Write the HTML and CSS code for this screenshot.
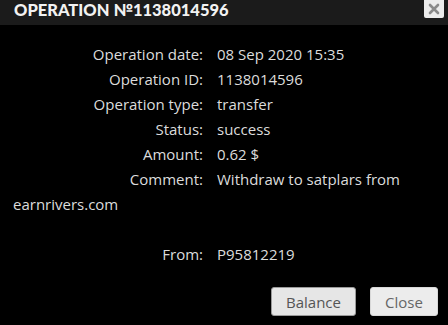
FILE: index.html
```html
<!DOCTYPE html>
<html>
<head>
<meta charset="utf-8">
<link rel="stylesheet" href="styles.css">
</head>
<body>
<div class="dialog">
  <div class="header">
    <div class="title">OPERATION №1138014596</div>
    <button class="x-btn" aria-label="close">
      <svg width="12" height="12" viewBox="0 0 12 12"><path d="M2 2 L10 10 M10 2 L2 10" stroke="#8a8a8a" stroke-width="2.6" stroke-linecap="round"/></svg>
    </button>
  </div>
  <div class="body">
    <div class="row"><span class="label">Operation date:</span><span class="value">08 Sep 2020 15:35</span></div>
    <div class="row"><span class="label">Operation ID:</span><span class="value">1138014596</span></div>
    <div class="row"><span class="label">Operation type:</span><span class="value">transfer</span></div>
    <div class="row"><span class="label">Status:</span><span class="value">success</span></div>
    <div class="row"><span class="label">Amount:</span><span class="value">0.62 $</span></div>
    <div class="row comment"><span class="label">Comment:</span>Withdraw to satplars from earnrivers.com</div>
    <div class="row"><span class="label">From:</span><span class="value">P95812219</span></div>
  </div>
  <div class="footer">
    <button class="btn balance">Balance</button>
    <button class="btn close">Close</button>
  </div>
</div>
</body>
</html>
```
FILE: styles.css
```css
html, body {
  margin: 0;
  padding: 0;
  background: #000;
}
.dialog {
  width: 448px;
  height: 325px;
  background: #000;
  font-family: "Open Sans", "Noto Sans", sans-serif;
  color: #dcdcdc;
}
.header {
  height: 25px;
  background: #1b1b1b;
  display: flex;
  justify-content: space-between;
  align-items: flex-start;
  padding-left: 14px;
}
.title {
  font-family: "Lato", sans-serif;
  font-weight: 900;
  font-size: 16.5px;
  line-height: 20px;
  color: #f2f2f2;
}
.x-btn {
  width: 20px;
  height: 18px;
  margin-right: 4px;
  border: none;
  border-radius: 0 0 2px 2px;
  background: #ececec;
  padding: 0;
  display: flex;
  align-items: center;
  justify-content: center;
}
.body {
  padding: 17px 13px 0 13px;
  font-size: 15px;
  line-height: 25px;
}
.row {
  display: block;
}
.label {
  display: inline-block;
  width: 190px;
  text-align: right;
  margin-right: 14px;
}
.comment {
  margin-bottom: 25px;
}
.footer {
  display: flex;
  justify-content: flex-end;
  gap: 14px;
  padding: 20px 10px 0 0;
}
.btn {
  height: 29px;
  border: 1px solid #9a9a9a;
  border-radius: 3px;
  background: #e6e6e6;
  color: #555;
  font-family: "Open Sans", sans-serif;
  font-size: 15px;
  padding: 0;
}
.close {
  border-color: #d8d8d8;
  background: #ececec;
  color: #666;
  width: 68px;
}
.balance {
  width: 85px;
}
```
